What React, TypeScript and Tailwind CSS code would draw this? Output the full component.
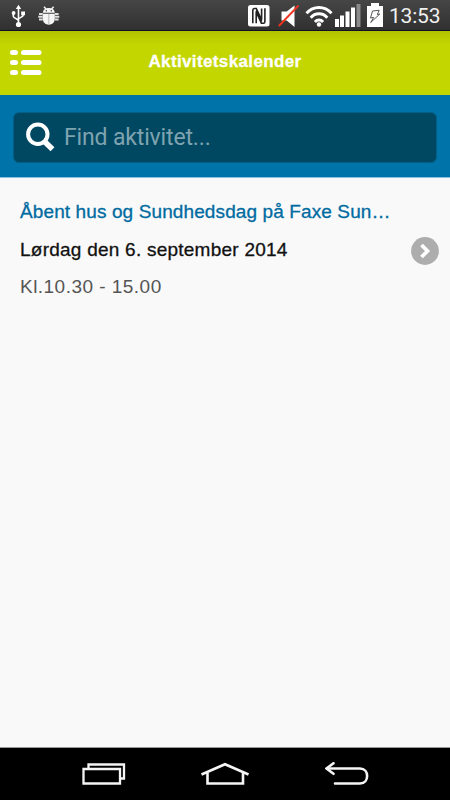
function UsbIcon() {
  return (
    <svg width="14" height="24" viewBox="0 0 14 24" fill="none" stroke="#fff" strokeWidth="1.6">
      <path d="M7.5 4v16M2.3 9v3.2c0 2.4 5.2 2.4 5.2 5M12.2 9v2c0 2.5-4.7 2.2-4.7 4.6" />
      <path d="M7.5.8 10.2 5H4.8zM10.2 7.6H14v3.6h-3.8z" fill="#fff" stroke="none" />
      <circle cx="2.6" cy="9" r="1.9" fill="#fff" stroke="none" />
      <circle cx="7.5" cy="20.5" r="2.6" fill="#fff" stroke="none" />
    </svg>
  );
}

function BugIcon() {
  return (
    <svg width="22" height="20" viewBox="0 0 22 20" fill="#f5f5f5">
      <path d="M6 .8 8 3M15.6.8 13.6 3" stroke="#f5f5f5" strokeWidth="1.5" />
      <path d="M4.8 6.8C5 3.6 7.6 2 10.8 2s5.8 1.6 6 4.8z" />
      <circle cx="8.3" cy="4.8" r=".7" fill="#333" />
      <circle cx="13.3" cy="4.8" r=".7" fill="#333" />
      <path d="M4.8 7.7h12v4.8c0 3.8-2.5 6.200-6 6.200s-6-2.400-6-6.200z" />
      <path d="M10.800 8v10.500" stroke="#aaa" strokeWidth=".8" />
      <path d="M1 8h3.800M.3 10.700h4.500M1 13.400h3.800M16.800 8h3.800M16.800 10.700h4.500M16.800 13.400h3.800" stroke="#ddd" strokeWidth="2" />
    </svg>
  );
}

function NfcIcon() {
  return (
    <svg width="22" height="22" viewBox="0 0 22 22">
      <rect width="21.5" height="21.5" rx="2.5" fill="#fff" />
      <g fill="none" stroke="#222">
        <path d="M4.8 18.300V5.200q0-1.700 1.500-1.700h2l5.300 11.300V3.500" strokeWidth="1.600" />
        <path d="M16.900 3.300v13.200q0 1.700-1.500 1.700h-2L8.200 7v11.300" strokeWidth="1.600" />
        <path d="m8.200 5.500 5.400 11" strokeWidth="1.800" />
      </g>
    </svg>
  );
}

function MuteIcon() {
  return (
    <svg width="22" height="22" viewBox="0 0 22 22">
      <path d="M3.5 6.5h5.200l7.800-6v21.500l-7.800-6.500H3.500z" fill="#fff" />
      <path d="M.8 21 20.500.5" stroke="#f0321e" strokeWidth="1.900" />
    </svg>
  );
}

function WifiIcon() {
  return (
    <svg width="28" height="22" viewBox="0 0 28 22" fill="none" stroke="#fff" strokeWidth="2.9">
      <path d="M1.5 8.300C8.500.6 19.500.6 26.500 8.300M5.700 12.700c4.600-5.200 12-5.200 16.600 0M9.900 16.900c2.300-2.500 5.900-2.500 8.200 0" />
      <circle cx="14" cy="19.500" r="2.200" fill="#fff" stroke="none" />
    </svg>
  );
}

function SignalIcon() {
  return (
    <svg width="26" height="24" viewBox="0 0 26 24" fill="#fff">
      <path d="M0 15h4v8H0zM5 11.500h4V23H5zM10.500 7.500h4V23h-4zM16 3.500h4V23h-4z" />
      <path d="M21.500 0h4v23h-4z" fill="#8b8b8b" />
    </svg>
  );
}

function BatteryIcon() {
  return (
    <svg width="16" height="24" viewBox="0 0 16 24">
      <path d="M4 0h8v3h4v21H0V3h4z" fill="#fff" />
      <path d="m5.500 8 6.700-.7-1.900 4.200 2.400-.4-9 8.400 3-5.100-3.200.6z" fill="#fff" stroke="#444" strokeWidth=".9" />
    </svg>
  );
}

function StatusBar() {
  return (
    <header className="flex h-[31px] items-start border-b border-[#101024] bg-gradient-to-b from-[#464646] to-[#303030]">
      <div className="ml-[11px] mt-1">
        <UsbIcon />
      </div>
      <div className="ml-[13px] mt-[6px]">
        <BugIcon />
      </div>
      <div className="ml-[188px] mt-[5px]">
        <NfcIcon />
      </div>
      <div className="ml-[8px] mt-[5px]">
        <MuteIcon />
      </div>
      <div className="ml-[5px] mt-[5px]">
        <WifiIcon />
      </div>
      <div className="ml-[2px] mt-1">
        <SignalIcon />
      </div>
      <div className="ml-[6px] mt-[3px]">
        <BatteryIcon />
      </div>
      <span className="ml-[6px] mt-[2px] whitespace-nowrap font-['Roboto',sans-serif] text-[21px] leading-[28px] tracking-[-0.2px] text-[#f0f0f0]">
        13:53
      </span>
    </header>
  );
}

function TitleBar() {
  return (
    <div className="grid h-16 grid-cols-[100px_1fr_100px] items-center bg-[#c3d600] bg-[linear-gradient(to_bottom,#b2c300,#c3d600_14px)]">
      <svg className="ml-[10px]" width="32" height="26" viewBox="0 0 32 26" fill="#fff">
        <rect x="0" y="0" width="8" height="5" rx="2.5" />
        <rect x="11" y="0" width="20.5" height="5" rx="2.5" />
        <rect x="0" y="10" width="8" height="5" rx="2.5" />
        <rect x="11" y="10" width="20.5" height="5" rx="2.5" />
        <rect x="0" y="20" width="8" height="5" rx="2.5" />
        <rect x="11" y="20" width="20.5" height="5" rx="2.5" />
      </svg>
      <h1 className="whitespace-nowrap pb-[2px] text-center text-[17px] font-bold leading-[22px] tracking-[0.37px] text-white [-webkit-text-stroke:0.3px_white]">
        Aktivitetskalender
      </h1>
    </div>
  );
}

function SearchBar() {
  return (
    <div className="h-[83px] border-b border-[#8fbfe0] bg-[#0073a8] px-[13px] pt-[17px]">
      <div className="flex h-[51px] items-center rounded-[6px] border border-[#006088] bg-[#004861]">
        <svg className="ml-[11px]" width="31" height="31" viewBox="0 0 31 31" fill="none" stroke="#fff">
          <circle cx="12.8" cy="12.3" r="9.7" strokeWidth="4" />
          <path d="m19.500 19.500 8 7.700" strokeWidth="5.6" />
        </svg>
        <span className="ml-[8px] font-['Roboto',sans-serif] text-[23px] leading-[30px] tracking-[-0.15px] text-[#7fa3b0]">
          Find aktivitet...
        </span>
      </div>
    </div>
  );
}

function ActivityRow() {
  return (
    <div className="flex items-center pl-5 pr-[11px] pt-[15px]">
      <div className="flex-1 whitespace-nowrap text-[19px] leading-[37.5px]">
        <h2 className="tracking-[0.11px] text-[#006ba1] [-webkit-text-stroke:0.3px_#006ba1]">
          Åbent hus og Sundhedsdag på Faxe Sun…
        </h2>
        <p className="tracking-[0.24px] text-[#111] [-webkit-text-stroke:0.3px_#111]">
          Lørdag den 6. september 2014
        </p>
        <p className="tracking-[0.47px] text-[#555]">Kl.10.30 - 15.00</p>
      </div>
      <svg className="mt-1" width="28" height="28" viewBox="0 0 28 28">
        <circle cx="14" cy="14" r="13.9" fill="#adadad" />
        <path d="m10.500 8 6 6-6 6" fill="none" stroke="#fff" strokeWidth="3.7" />
      </svg>
    </div>
  );
}

function NavigationBar() {
  return (
    <nav className="flex h-[53px] items-start border-t border-[#999] bg-black pt-[14px]">
      <svg className="ml-[81px]" width="46" height="24" viewBox="0 0 46 24" fill="none" stroke="#f5f5f5" strokeWidth="2.3">
        <path d="M2.500 7H39v14.500H2.500z" />
        <path d="M7.500 7V2.500h35.500V16.500h-4" />
      </svg>
      <svg className="ml-[73px]" width="50" height="24" viewBox="0 0 50 24" fill="none" stroke="#f5f5f5" strokeWidth="2.6">
        <path d="m1.500 12.500 23.500-10.300 23.500 10.300" />
        <path d="M7.500 10.500v11h35.500v-11" />
      </svg>
      <svg className="ml-[75px]" width="46" height="26" viewBox="0 0 46 26" fill="none" stroke="#f5f5f5" strokeWidth="2.6" strokeLinecap="round">
        <path d="M2 6.500h33c9.500 0 9.500 15 0 15H10" />
        <path d="m8.500 1.200-7 5.300 7 5.300" />
      </svg>
    </nav>
  );
}

export default function App() {
  return (
    <div className="flex h-[800px] w-[450px] flex-col overflow-hidden bg-[#f9f9f9] font-['Liberation_Sans',Arial,sans-serif]">
      <StatusBar />
      <TitleBar />
      <SearchBar />
      <main className="flex-1">
        <ActivityRow />
      </main>
      <NavigationBar />
    </div>
  );
}
